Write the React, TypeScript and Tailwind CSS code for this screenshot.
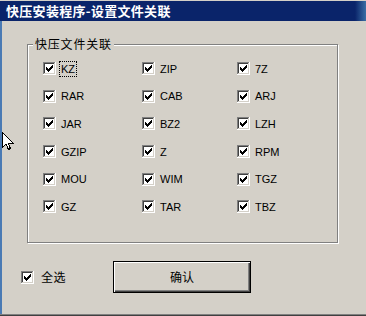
import React from "react";

const rows: string[][] = [
  ["KZ", "ZIP", "7Z"],
  ["RAR", "CAB", "ARJ"],
  ["JAR", "BZ2", "LZH"],
  ["GZIP", "Z", "RPM"],
  ["MOU", "WIM", "TGZ"],
  ["GZ", "TAR", "TBZ"],
];

const checkRows: [number, number, number][] = [
  [3, 9, 1],
  [4, 8, 2],
  [5, 3, 1],
  [5, 7, 3],
  [6, 3, 2],
  [6, 6, 3],
  [7, 3, 5],
  [8, 4, 3],
  [9, 5, 1],
];

function CheckBox() {
  return (
    <svg width="13" height="13" viewBox="0 0 13 13" shapeRendering="crispEdges" className="shrink-0 block">
      <rect x="0" y="0" width="13" height="13" fill="#ffffff" />
      <rect x="0" y="0" width="12" height="1" fill="#808080" />
      <rect x="0" y="0" width="1" height="12" fill="#808080" />
      <rect x="1" y="1" width="10" height="1" fill="#404040" />
      <rect x="1" y="1" width="1" height="10" fill="#404040" />
      <rect x="1" y="11" width="11" height="1" fill="#d4d0c8" />
      <rect x="11" y="1" width="1" height="11" fill="#d4d0c8" />
      {checkRows.map(([y, x, w], i) => (
        <rect key={i} x={x} y={y} width={w} height="1" fill="#000000" />
      ))}
    </svg>
  );
}

function Item({ label, focus }: { label: string; focus?: boolean }) {
  return (
    <div className="flex items-center h-[27.6px]">
      <CheckBox />
      <span
        className={
          "ml-[3px] px-[1px] leading-[14px] text-[11px] text-black " +
          (focus ? "border border-dotted border-black" : "border border-transparent")
        }
      >
        {label}
      </span>
    </div>
  );
}

export default function App() {
  return (
    <div
      className="relative w-[366px] h-[316px] bg-[#d4d0c8] overflow-hidden flex flex-col"
      style={{ fontFamily: '"Liberation Sans", "Noto Sans CJK SC", sans-serif' }}
    >
      <div className="h-[1px] bg-[#d4d0c8] shrink-0" />
      <div className="h-[20px] shrink-0 flex items-center bg-[linear-gradient(to_right,#0a246a_0%,#0a246a_97%,#3a6ea5_100%)] pl-[6px]">
        <span
          className="text-white font-bold text-[13px] leading-[16px] tracking-[0.3px]"
          style={{ fontFamily: '"Noto Sans CJK SC", sans-serif' }}
        >
          快压安装程序-设置文件关联
        </span>
      </div>
      <div className="flex flex-1 min-h-0">
        <div className="w-[2px] bg-[#4a7ab4] shrink-0" />
        <div className="flex-1 flex flex-col">
          <div className="ml-[25px] mt-[23px] w-[311px] h-[199px] border border-[#808080] shadow-[inset_1px_1px_0_#ffffff,1px_1px_0_#ffffff] flex flex-col">
            <div
              className="-mt-[9px] ml-[5px] self-start bg-[#d4d0c8] px-[2px] text-[12px] leading-[16px] tracking-[0.8px] text-black"
              style={{ fontFamily: '"Noto Sans CJK SC", sans-serif' }}
            >
              快压文件关联
            </div>
            <div className="mt-[3px] ml-[15px] grid grid-cols-[99px_95px_1fr]">
              {rows.map((r, ri) =>
                r.map((l, ci) => <Item key={ri + "-" + ci} label={l} focus={ri === 0 && ci === 0} />)
              )}
            </div>
          </div>
          <div className="flex items-center mt-[18px] ml-[19px]">
            <CheckBox />
            <span
              className="ml-[7px] text-[12px] leading-[16px] text-black tracking-[0.5px]"
              style={{ fontFamily: '"Noto Sans CJK SC", sans-serif' }}
            >
              全选
            </span>
            <button
              className="ml-[47px] w-[138px] h-[32px] border border-black bg-[#d4d0c8] shadow-[inset_1px_1px_0_#ffffff,inset_-1px_-1px_0_#404040,inset_-2px_-2px_0_#808080] text-[12px] text-black flex items-center justify-center"
              style={{ fontFamily: '"Noto Sans CJK SC", sans-serif' }}
            >
              确认
            </button>
          </div>
        </div>
      </div>
      <div className="h-[1px] bg-[#808080] shrink-0" />
      <div className="h-[1px] bg-[#404040] shrink-0" />
      <svg
        className="absolute left-[2px] top-[132px]"
        width="12"
        height="19"
        viewBox="0 0 12 19"
        shapeRendering="crispEdges"
      >
        <path
          d="M0.5 0.5 L0.5 15.5 L4 12 L6.5 17.5 L8.5 16.5 L6 11 L11 11 Z"
          fill="#ffffff"
          stroke="#000000"
          strokeWidth="1"
        />
      </svg>
    </div>
  );
}
